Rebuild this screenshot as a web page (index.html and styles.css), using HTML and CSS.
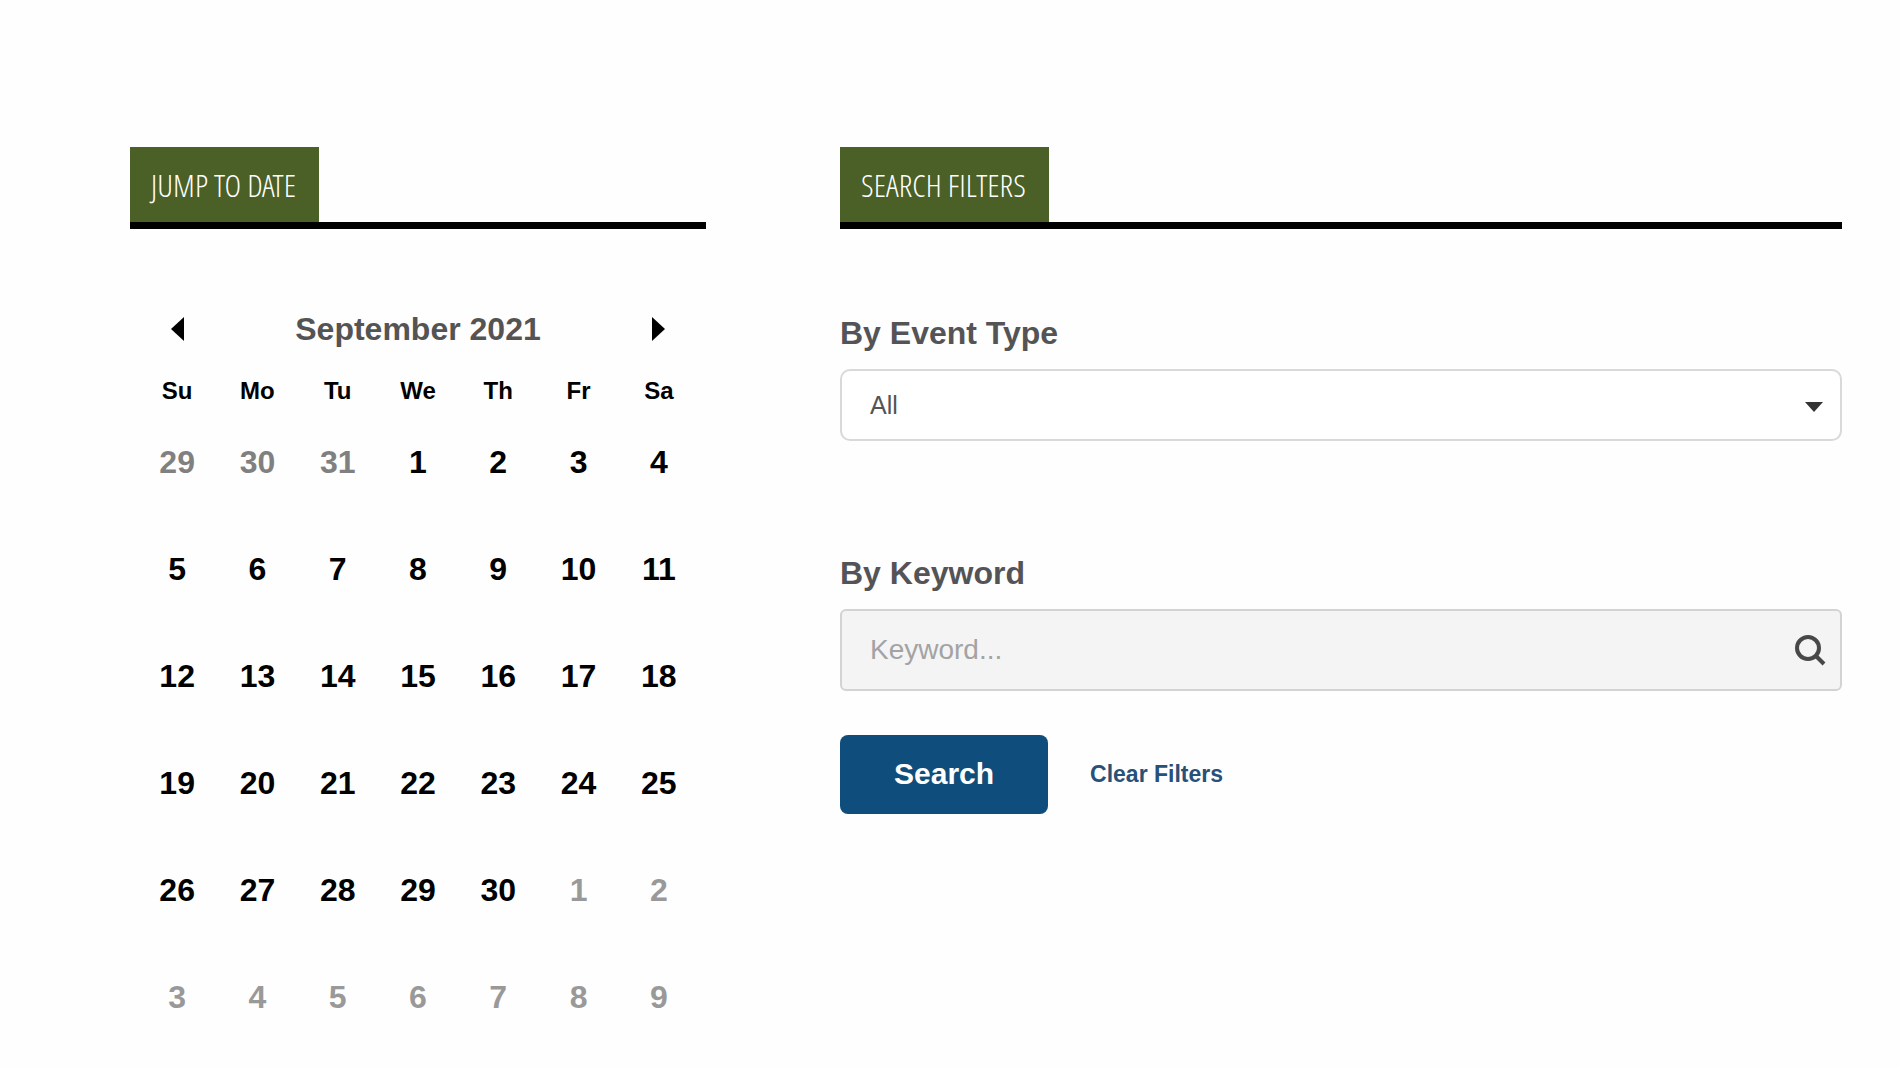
FILE: index.html
```html
<!DOCTYPE html>
<html lang="en">
<head>
  <meta charset="UTF-8" />
  <meta name="viewport" content="width=device-width, initial-scale=1.0"/>
  <title>Events</title>
  <link rel="stylesheet" href="styles.css">
</head>
<body>
  <main class="page">
    <section class="panel">
      <div class="panel-head"><h2>JUMP TO DATE</h2></div>

      <div class="calendar">
        <div class="cal-nav">
          <button type="button" class="nav-btn" aria-label="Previous month">
            <svg width="14" height="24" viewBox="0 0 14 24"><path d="M13 0v24L0 12z"/></svg>
          </button>
          <h3>September 2021</h3>
          <button type="button" class="nav-btn" aria-label="Next month">
            <svg width="14" height="24" viewBox="0 0 14 24"><path d="M1 0v24l13-12z"/></svg>
          </button>
        </div>
        <table class="cal-table">
          <thead>
            <tr><th>Su</th><th>Mo</th><th>Tu</th><th>We</th><th>Th</th><th>Fr</th><th>Sa</th></tr>
          </thead>
          <tbody>
            <tr><td class="prev">29</td><td class="prev">30</td><td class="prev">31</td><td>1</td><td>2</td><td>3</td><td>4</td></tr>
            <tr><td>5</td><td>6</td><td>7</td><td>8</td><td>9</td><td>10</td><td>11</td></tr>
            <tr><td>12</td><td>13</td><td>14</td><td>15</td><td>16</td><td>17</td><td>18</td></tr>
            <tr><td>19</td><td>20</td><td>21</td><td>22</td><td>23</td><td>24</td><td>25</td></tr>
            <tr><td>26</td><td>27</td><td>28</td><td>29</td><td>30</td><td class="next">1</td><td class="next">2</td></tr>
            <tr><td class="next">3</td><td class="next">4</td><td class="next">5</td><td class="next">6</td><td class="next">7</td><td class="next">8</td><td class="next">9</td></tr>
          </tbody>
        </table>
      </div>
    </section>

    <section class="panel">
      <div class="panel-head"><h2>SEARCH FILTERS</h2></div>

      <form class="filters">
        <label for="event-type">By Event Type</label>
        <div class="select-box">
          <select id="event-type">
            <option>All</option>
          </select>
          <svg class="caret" width="18" height="10" viewBox="0 0 18 10"><path d="M0 0h18L9 10z"/></svg>
        </div>

        <label for="keyword">By Keyword</label>
        <div class="keyword-box">
          <input type="text" id="keyword" placeholder="Keyword..." />
          <svg width="32" height="32" viewBox="0 0 32 32"><circle cx="14" cy="14" r="11"/><path d="M22 22l8 8"/></svg>
        </div>

        <div class="actions">
          <button type="submit" class="btn">Search</button>
          <a href="#" class="clear">Clear Filters</a>
        </div>
      </form>
    </section>
  </main>
</body>
</html>
```
FILE: styles.css
```css
* {
  box-sizing: border-box;
}

body {
  margin: 0;
  background: #fefefe;
  font-family: "Liberation Sans", Arial, sans-serif;
  color: #000;
}

.page {
  display: grid;
  grid-template-columns: 576fr 1002fr;
  column-gap: 134px;
  padding: 147px 58px 0 130px;
}

.panel-head {
  display: flex;
  border-bottom: 7px solid #000;
}

.panel-head h2 {
  margin: 0;
  padding: 0 23px 0 21px;
  background: #4b6026;
  color: #fff;
  font-family: "Open Sans Condensed Light", "Open Sans Condensed", "Liberation Sans Narrow", sans-serif;
  font-size: 32px;
  font-weight: 300;
  line-height: 75px;
  white-space: nowrap;
}

.calendar {
  padding: 80px 7px 0;
}

.cal-nav {
  display: flex;
  align-items: center;
  justify-content: space-between;
  padding: 0 34px;
}

.cal-nav h3 {
  margin: 0;
  font-size: 32px;
  line-height: 40px;
  color: #545454;
}

.nav-btn {
  display: flex;
  padding: 0;
  border: none;
  background: none;
  cursor: pointer;
}

.cal-table {
  width: 100%;
  border-collapse: collapse;
  table-layout: fixed;
  font-weight: bold;
  text-align: center;
}

.cal-table th {
  height: 60px;
  padding: 24px 0 0;
  font-size: 24px;
}

.cal-table td {
  height: 107px;
  padding: 0;
  font-size: 32px;
}

.cal-table .prev {
  color: #808080;
}

.cal-table .next {
  color: #999;
}

.filters {
  padding-top: 82px;
}

.filters label {
  display: block;
  margin-bottom: 14px;
  font-size: 32px;
  font-weight: bold;
  line-height: 44px;
  color: #545456;
}

.select-box {
  position: relative;
  margin-bottom: 110px;
}

.select-box select {
  display: block;
  width: 100%;
  height: 72px;
  padding: 0 28px;
  border: 2px solid #d9d9d9;
  border-radius: 10px;
  background: #fff;
  color: #545454;
  font-family: inherit;
  font-size: 25px;
  appearance: none;
}

.caret {
  position: absolute;
  top: 33px;
  right: 19px;
  fill: #333;
  pointer-events: none;
}

.keyword-box {
  display: flex;
  align-items: center;
  height: 82px;
  padding: 0 14px 0 28px;
  border: 2px solid #d3d3d3;
  border-radius: 6px;
  background: #f4f4f4;
}

.keyword-box input {
  flex: 1;
  min-width: 0;
  padding: 0;
  border: none;
  outline: none;
  background: none;
  font-family: inherit;
  font-size: 28px;
}

.keyword-box input::placeholder {
  color: #a3a3a3;
}

.keyword-box svg {
  fill: none;
  stroke: #484848;
  stroke-width: 4;
}

.actions {
  display: flex;
  align-items: center;
  gap: 42px;
  margin-top: 44px;
}

.btn {
  height: 79px;
  padding: 0 54px 2px;
  border: none;
  border-radius: 8px;
  background: #0f4e7c;
  color: #fff;
  font-family: inherit;
  font-size: 30px;
  font-weight: bold;
  cursor: pointer;
}

.btn:hover {
  background: #0b3d62;
}

.clear {
  color: #285078;
  font-size: 23px;
  font-weight: bold;
  text-decoration: none;
}
```
